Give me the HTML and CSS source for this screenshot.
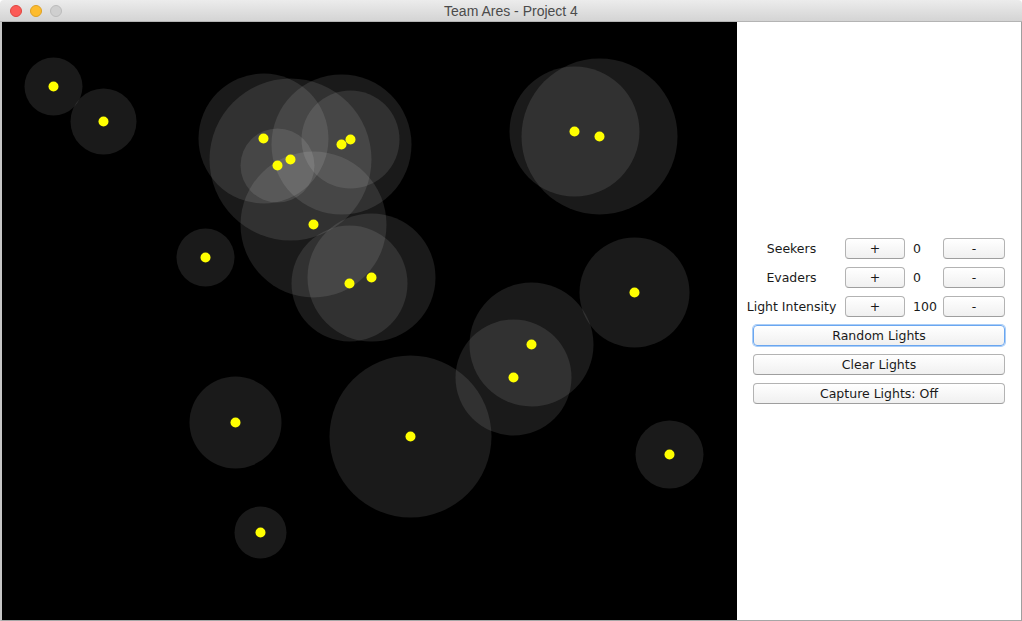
FILE: index.html
```html
<!DOCTYPE html>
<html>
<head>
<meta charset="utf-8">
<title>Team Ares - Project 4</title>
<link rel="stylesheet" href="styles.css">
</head>
<body>
<div class="window">
  <div class="titlebar">
    <div class="lights">
      <span class="light red"></span>
      <span class="light yellow"></span>
      <span class="light gray"></span>
    </div>
    <div class="title">Team Ares - Project 4</div>
    <div class="spacer"></div>
  </div>
  <div class="content">
    <div class="canvas">
      <svg class="field" width="735" height="598" viewBox="1.5 21.5 735 598">
        <g class="halos">
          <circle cx="53" cy="86" r="29"/>
          <circle cx="103" cy="121" r="33"/>
          <circle cx="263" cy="138" r="65"/>
          <circle cx="277" cy="165" r="37"/>
          <circle cx="290" cy="159" r="81"/>
          <circle cx="341" cy="144" r="70"/>
          <circle cx="350" cy="139" r="49"/>
          <circle cx="313" cy="224" r="73"/>
          <circle cx="349" cy="283" r="58"/>
          <circle cx="371" cy="277" r="64"/>
          <circle cx="205" cy="257" r="29"/>
          <circle cx="574" cy="131" r="65"/>
          <circle cx="599" cy="136" r="78"/>
          <circle cx="634" cy="292" r="55"/>
          <circle cx="531" cy="344" r="62"/>
          <circle cx="513" cy="377" r="58"/>
          <circle cx="235" cy="422" r="46"/>
          <circle cx="410" cy="436" r="81"/>
          <circle cx="669" cy="454" r="34"/>
          <circle cx="260" cy="532" r="26"/>
        </g>
        <g class="dots">
          <circle cx="53" cy="86" r="5"/>
          <circle cx="103" cy="121" r="5"/>
          <circle cx="263" cy="138" r="5"/>
          <circle cx="277" cy="165" r="5"/>
          <circle cx="290" cy="159" r="5"/>
          <circle cx="341" cy="144" r="5"/>
          <circle cx="350" cy="139" r="5"/>
          <circle cx="313" cy="224" r="5"/>
          <circle cx="349" cy="283" r="5"/>
          <circle cx="371" cy="277" r="5"/>
          <circle cx="205" cy="257" r="5"/>
          <circle cx="574" cy="131" r="5"/>
          <circle cx="599" cy="136" r="5"/>
          <circle cx="634" cy="292" r="5"/>
          <circle cx="531" cy="344" r="5"/>
          <circle cx="513" cy="377" r="5"/>
          <circle cx="235" cy="422" r="5"/>
          <circle cx="410" cy="436" r="5"/>
          <circle cx="669" cy="454" r="5"/>
          <circle cx="260" cy="532" r="5"/>
        </g>
      </svg>
    </div>
    <div class="panel">
      <div class="controls">
        <span class="label">Seekers</span>
        <button class="btn">+</button>
        <span class="value">0</span>
        <button class="btn">-</button>

        <span class="label">Evaders</span>
        <button class="btn">+</button>
        <span class="value">0</span>
        <button class="btn">-</button>

        <span class="label">Light Intensity</span>
        <button class="btn">+</button>
        <span class="value">100</span>
        <button class="btn">-</button>

        <button class="btn wide focused">Random Lights</button>
        <button class="btn wide">Clear Lights</button>
        <button class="btn wide">Capture Lights: Off</button>
      </div>
    </div>
  </div>
</div>
</body>
</html>
```
FILE: styles.css
```css
html, body {
  margin: 0;
  padding: 0;
  background: #ffffff;
}

.window {
  width: 1022px;
  height: 621px;
  display: flex;
  flex-direction: column;
  overflow: hidden;
}

.titlebar {
  height: 21px;
  border-bottom: 1px solid #b4b4b4;
  background: linear-gradient(#ececec, #d4d4d4);
  border-radius: 4px 4px 0 0;
  display: grid;
  grid-template-columns: 1fr auto 1fr;
  align-items: center;
}

.lights {
  display: flex;
  gap: 8px;
  padding-left: 10px;
}

.light {
  width: 10px;
  height: 10px;
  border-radius: 50%;
  border: 1px solid transparent;
}

.light.red {
  background: #fc5b57;
  border-color: #e0443e;
}

.light.yellow {
  background: #fdbc2e;
  border-color: #dea123;
}

.light.gray {
  background: #cfcfcf;
  border-color: #bcbcbc;
}

.title {
  font-family: "Liberation Sans", Arial, sans-serif;
  font-size: 14px;
  color: #4b4b4b;
  line-height: 22px;
}

.content {
  flex: 1;
  display: flex;
  border-left: 2px solid #c6c6c6;
  border-right: 1px solid #9f9f9f;
  border-bottom: 1px solid #a6a6a6;
}

.canvas {
  width: 735px;
  height: 598px;
  background: #000000;
}

.field {
  display: block;
}

.halos circle {
  fill: #ffffff;
  fill-opacity: 0.1;
}

.dots circle {
  fill: #ffff00;
}

.panel {
  flex: 1;
  background: #ffffff;
  display: flex;
  flex-direction: column;
  justify-content: center;
  padding-left: 3px;
}

.controls {
  display: grid;
  grid-template-columns: 105px 60px 38px 62px;
  grid-auto-rows: 21px;
  row-gap: 8px;
  align-items: center;
  font-family: "DejaVu Sans", Verdana, sans-serif;
  font-size: 12.5px;
  color: #1a1a1a;
}

.label {
  text-align: center;
  padding-right: 2px;
  white-space: nowrap;
}

.value {
  padding-left: 8px;
}

.btn {
  height: 21px;
  margin: 0;
  padding: 0;
  border: 1px solid #b3b3b3;
  border-bottom-color: #9e9e9e;
  border-radius: 4px;
  background: linear-gradient(#ffffff, #f0f0f0);
  font-family: "DejaVu Sans", Verdana, sans-serif;
  font-size: 12.5px;
  color: #1a1a1a;
  line-height: 19px;
  text-align: center;
}

.btn.wide {
  grid-column: 1 / -1;
  margin-left: 13px;
}

.btn.focused {
  border-color: #6aa6f0;
  box-shadow: 0 0 0 1px #a9cdf7;
}
```
